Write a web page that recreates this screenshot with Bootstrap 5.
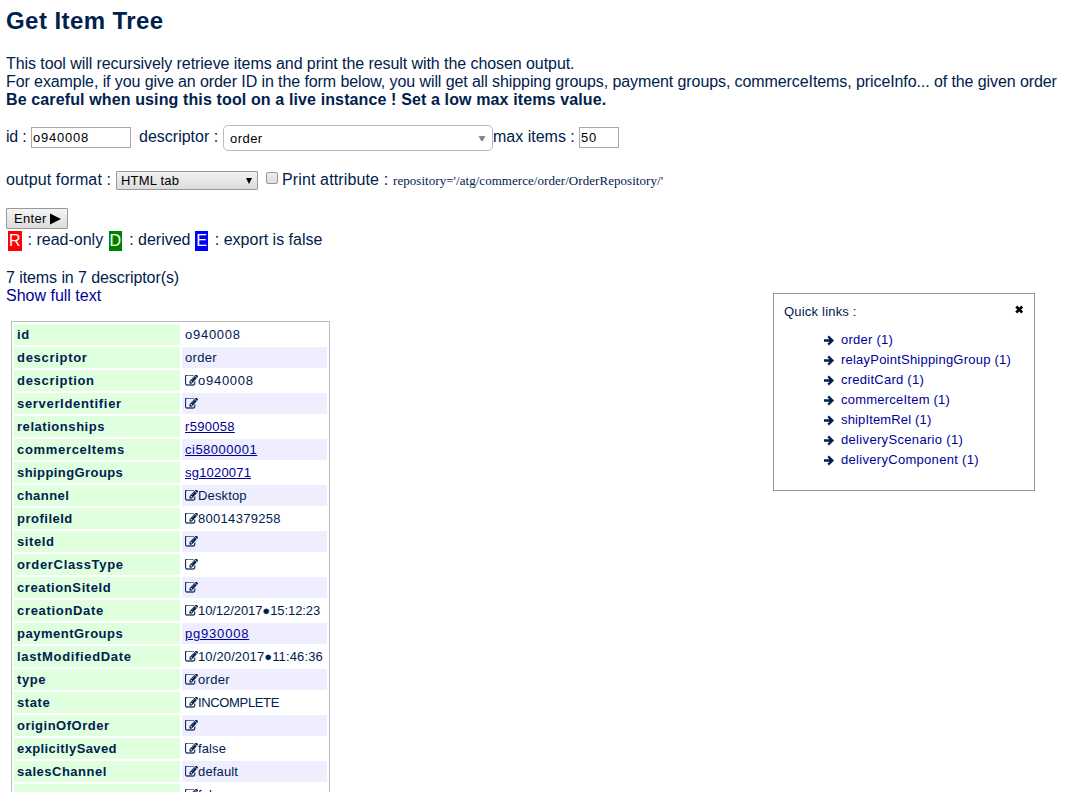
<!DOCTYPE html>
<html lang="en">
<head>
<meta charset="utf-8">
<title>Get Item Tree</title>
<meta name="viewport" content="width=device-width, initial-scale=1">
<link href="https://cdn.jsdelivr.net/npm/bootstrap@5.3.0/dist/css/bootstrap.min.css" rel="stylesheet">
<style>
body{font:16px/18px "Liberation Sans",Arial,sans-serif;color:#00214d;height:792px;overflow:hidden;padding:0 6px}
h1{font-size:24px;line-height:28px;font-weight:700;padding-top:7px;margin:0 0 20px;letter-spacing:.43px}
a{color:#000099;text-decoration:none}
.intro,.line{white-space:nowrap}
.intro{letter-spacing:-.09px}
.intro b{letter-spacing:.125px}
.field{font-size:13px;color:#000;border:1px solid #a9a9a9;border-radius:0;height:21px;padding:0 1px;letter-spacing:.77px;outline:0}
.chooser{width:270px;height:26px;border:1px solid #bbb;border-radius:5px;font-size:13px;color:#000;padding:2px 6px 0;letter-spacing:.45px}
.fmt{width:142px;height:19px;font-size:13px;color:#000;border:1px solid #999;border-radius:1px;background:linear-gradient(#f2f2f2,#dcdcdc);padding:0 4px;letter-spacing:.2px}
.chk{appearance:none;width:12px;height:12px;border:1px solid #999;border-radius:2px;background:linear-gradient(#eee,#ddd);margin:0}
.repo{font:13px/18px "Liberation Serif",serif;letter-spacing:.05px}
.enter{width:62px;height:21px;font-size:13px;line-height:19px;padding:0 0 0 7px;color:#000;border:1px solid #999;border-radius:1px;background:linear-gradient(#f4f4f4,#dcdcdc);letter-spacing:.3px;margin-top:18px}
.flag{color:#fff;height:20px;line-height:20px;padding:0 1px}
.tree{border:1px solid #bbb;border-collapse:separate;border-spacing:2px;width:319px;margin:16px 0 0 5px;font-size:13px;line-height:15px;table-layout:fixed}
.tree th,.tree td{height:21px;padding:3px;white-space:nowrap}
.tree th{width:166px;background:#dfffdf}
.tree tr:nth-child(even) td{background:#eef}
.tree a{text-decoration:underline}
.tree svg{width:13px;height:11px;vertical-align:-1px;fill:currentColor;stroke:currentColor;stroke-width:30}
.quick{position:absolute;left:773px;top:293px;width:262px;height:198px;border:1px solid #999;background:#fff;font-size:13px;line-height:20px;letter-spacing:.2px;padding:8px 10px}
.quick ul{padding-left:40px;margin:8px 0 0}
.quick li svg{margin-right:7px;vertical-align:-1.5px}
</style>
</head>
<body>
<svg class="d-none"><symbol id="edit" viewBox="0 200 1792 1392" preserveAspectRatio="none"><path d="M888 1184l116-116-152-152-116 116v56h96v96h56zm440-720q-16-16-33 1l-350 350q-17 17-1 33t33-1l350-350q17-17 1-33zm80 594v190q0 119-84.5 203.5t-203.5 84.5h-832q-119 0-203.5-84.5t-84.5-203.5v-832q0-119 84.5-203.5t203.5-84.5h832q63 0 117 25 15 7 18 23 3 17-9 29l-49 49q-14 14-32 8-23-6-45-6h-832q-66 0-113 47t-47 113v832q0 66 47 113t113 47h832q66 0 113-47t47-113v-126q0-13 9-22l64-64q15-15 35-7t20 29zm-96-738l288 288-672 672h-288v-288zm444 132l-92 92-288-288 92-92q28-28 68-28t68 28l152 152q28 28 28 68t-28 68z"/></symbol>
<symbol id="go" viewBox="0 0 10 10"><path d="M0 5h8M4.2 .9l4.2 4.1-4.2 4.1" fill="none" stroke="currentColor" stroke-width="2.3"/></symbol></svg>
<h1>Get Item Tree</h1>
<div class="intro"><span style="letter-spacing:-.07px">This tool will recursively retrieve items and print the result with the chosen output.</span><br>For example, if you give an order ID in the form below, you will get all shipping groups, payment groups, commerceItems, priceInfo... of the given order<br><b>Be careful when using this tool on a live instance ! Set a low max items value.</b></div>
<form>
<div class="line d-flex align-items-start" style="margin-top:16px">
<label style="width:25px;margin-top:3px;letter-spacing:-.2px">id :</label><input class="field" style="width:100px;margin-top:2px" value="o940008"><label style="width:92px;margin:3px 0 0 0;padding-left:8px">descriptor :</label>
<div class="chooser d-flex align-items-center justify-content-between"><span>order</span><svg width="8" height="6"><path d="M.5 0h7L4.8 5H3.2z" fill="#888"/></svg></div>
<label style="width:86px;margin-top:3px">max items :</label><input class="field" style="width:40px;margin-top:2px" value="50">
</div>
<div class="line d-flex align-items-start" style="margin-top:20px">
<label style="width:110px;letter-spacing:.13px">output format :</label><div class="fmt d-flex align-items-center justify-content-between"><span>HTML tab</span><svg width="8" height="6"><path d="M1 0h6L4 6z"/></svg></div>
<input type="checkbox" class="chk" style="margin:1px 4px 0 8px"><label style="width:111px;letter-spacing:.13px">Print attribute :</label><span class="repo" style="margin-top:1px">repository='/atg/commerce/order/OrderRepository/'</span>
</div>
<button type="button" class="enter d-flex align-items-center"><span>Enter</span><svg width="11" height="12" style="margin-left:3px"><path d="M0 .5L11 6 0 11.5z"/></svg></button>
</form>
<div class="line d-flex" style="padding:2px 0 0 2px"><span class="flag" style="background:red">R</span><span style="width:87px;padding-left:6px">: read-only</span><span class="flag" style="background:green">D</span><span style="width:73px;padding-left:7px">: derived</span><span class="flag" style="background:blue">E</span><span style="padding-left:7px">: export is false</span></div>
<div style="margin-top:18px"><span style="letter-spacing:-.08px">7 items in 7 descriptor(s)</span><br><a href="#">Show full text</a></div>
<table class="tree"><tbody id="rows"></tbody></table>
<aside class="quick"><div class="d-flex justify-content-between"><span>Quick links :</span><svg width="9" height="9" style="margin-top:3px"><path d="M1.2 1.5l6 6m0-6l-6 6" stroke="#000" stroke-width="2.6"/></svg></div><ul class="list-unstyled" id="links"></ul></aside>
<script>
// name, value, kind (0 plain, 1 editable, 2 link), tracking of name and value
const icon='<svg><use href="#edit"/></svg>';
const rows=[['id','o940008',0,.6,.73],['descriptor','order',0,.7,.3],['description','o940008',1,.7,.73],['serverIdentifier','',1,.68,0],['relationships','r590058',2,.55,.3],['commerceItems','ci58000001',2,.68,.5],['shippingGroups','sg1020071',2,.42,.2],['channel','Desktop',1,.45,.15],['profileId','80014379258',1,.5,.3],['siteId','',1,.6,0],['orderClassType','',1,.67,0],['creationSiteId','',1,.6,0],['creationDate','10/12/2017●15:12:23',1,.68,-.07],['paymentGroups','pg930008',2,.5,.8],['lastModifiedDate','10/20/2017●11:46:36',1,.66,.12],['type','order',1,.6,.3],['state','INCOMPLETE',1,.6,-.35],['originOfOrder','',1,.5,0],['explicitlySaved','false',1,.4,.1],['salesChannel','default',1,.5,.15],['','false',1,.6,.1]];
document.getElementById('rows').innerHTML=rows.map(([k,v,t,a,b])=>`<tr><th style="letter-spacing:${a}px">${k}</th><td>${t===1?icon:''}<span style="letter-spacing:${b}px">${t===2?`<a href="#">${v}</a>`:v}</span></td></tr>`).join('');
document.getElementById('links').innerHTML=[['order',.25],['relayPointShippingGroup',.22],['creditCard',.25],['commerceItem',.23],['shipItemRel',.15],['deliveryScenario',.33],['deliveryComponent',.3]].map(([n,s])=>`<li style="letter-spacing:${s}px"><svg width="10" height="11"><use href="#go"/></svg><a href="#">${n} (1)</a></li>`).join('');
</script>
</body>
</html>
